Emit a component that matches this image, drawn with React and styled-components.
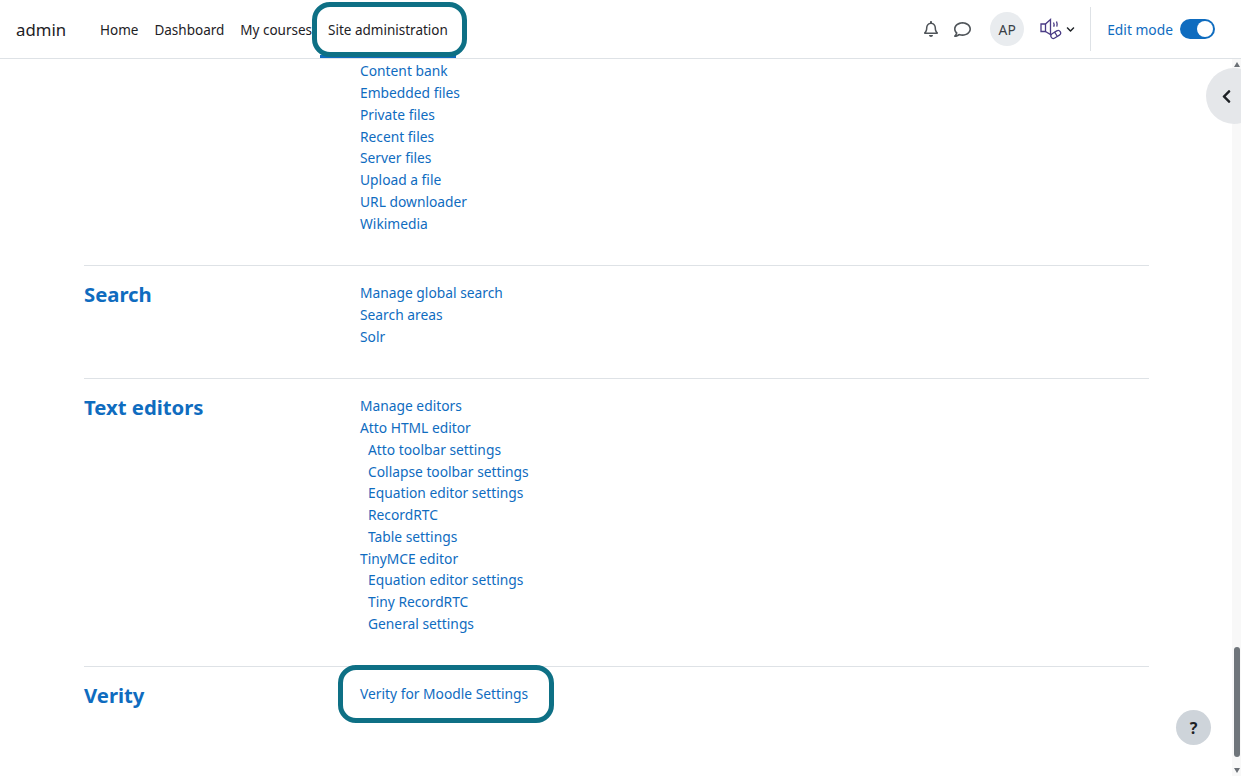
import styled, { createGlobalStyle } from 'styled-components';
import { FaRegBell, FaRegComment, FaChevronDown, FaChevronLeft } from 'react-icons/fa';

const GlobalStyle = createGlobalStyle`
  html, body {
    margin: 0;
    padding: 0;
    background: #fff;
    font-family: "Noto Sans", "Open Sans", Arial, sans-serif;
    font-size: 13.8px;
    color: #1d2125;
  }
`;

const RING = '#0e7085';
const BLUE = '#0f6cbf';

const Page = styled.div`
  position: relative;
  width: 1241px;
  height: 776px;
  overflow: hidden;
  display: flex;
  flex-direction: column;
`;

const Navbar = styled.header`
  height: 58px;
  flex: none;
  display: flex;
  align-items: stretch;
  padding-left: 16px;
  border-bottom: 1px solid #dee2e6;
`;

const Brand = styled.div`
  width: 76px;
  display: flex;
  align-items: center;
  font-size: 16.8px;
`;

const NavList = styled.nav`
  display: flex;
  align-items: stretch;
`;

const NavItem = styled.a`
  position: relative;
  display: flex;
  align-items: center;
  padding: 1px 8px 0;
  font-size: 13.5px;
  white-space: nowrap;

  ${(p) => p.$active && `
    &::before {
      content: '';
      position: absolute;
      left: 0;
      right: 0;
      bottom: 0;
      height: 3px;
      background: ${BLUE};
    }
    &::after {
      content: '';
      position: absolute;
      left: -8px;
      right: -11px;
      top: 2px;
      bottom: 1px;
      border: 5.5px solid ${RING};
      border-radius: 18px;
      background: transparent;
    }
  `}
`;

const RightNav = styled.div`
  margin-left: auto;
  display: flex;
  align-items: center;
  padding-right: 26px;
`;

const IconSlot = styled.span`
  display: flex;
  color: #4f5459;
  font-size: ${(p) => p.$size || 16}px;
  margin-right: ${(p) => p.$gap || 0}px;
`;

const Avatar = styled.div`
  width: 34px;
  height: 34px;
  border-radius: 50%;
  background: #e9ecef;
  display: flex;
  align-items: center;
  justify-content: center;
  color: #3a4046;
  margin-right: 16px;
`;

const LangMenu = styled.div`
  display: flex;
  align-items: center;
  gap: 4px;
  color: #1d2125;
  font-size: 9px;
`;

const Divider = styled.div`
  width: 1px;
  height: 44px;
  background: #dee2e6;
  margin: 0 16px 0 15px;
`;

const EditLabel = styled.span`
  color: ${BLUE};
  margin-right: 7px;
`;

const Toggle = styled.div`
  width: 35px;
  height: 20px;
  border-radius: 10px;
  background: ${BLUE};
  display: flex;
  justify-content: flex-end;
  align-items: center;
  padding-right: 2px;
  box-sizing: border-box;
`;

const Knob = styled.div`
  width: 16px;
  height: 16px;
  border-radius: 50%;
  background: #fff;
`;

const Body = styled.div`
  flex: 1;
  display: flex;
  min-height: 0;
`;

const Main = styled.main`
  flex: 1;
  padding: 1.3px 83px 0 84px;
`;

const Section = styled.section`
  display: grid;
  grid-template-columns: 276px 1fr;
  padding: ${(p) => (p.$first ? 0 : 16)}px 0 ${(p) => p.$bottom}px;
  border-top: ${(p) => (p.$first ? 'none' : '1px solid #dee2e6')};
`;

const Heading = styled.h2`
  margin: 0;
  color: ${BLUE};
  font-size: 20.3px;
  font-weight: 700;
  line-height: 25px;
`;

const LinkList = styled.div`
  display: flex;
  flex-direction: column;
  align-items: flex-start;
`;

const TextLink = styled.a`
  position: relative;
  color: ${BLUE};
  line-height: 21.78px;
  white-space: nowrap;
  padding-left: ${(p) => (p.$sub ? 8 : 0)}px;

  ${(p) => p.$ringed && `
    &::after {
      content: '';
      position: absolute;
      left: -22px;
      right: -26px;
      top: -18px;
      bottom: -18px;
      border: 5.5px solid ${RING};
      border-radius: 18px;
    }
  `}
`;

const ScrollTrack = styled.div`
  width: 9px;
  flex: none;
  background: #f8f8f8;
  display: flex;
  flex-direction: column;
  align-items: center;
  justify-content: space-between;
  padding: 3px 0 3px;
  box-sizing: border-box;
`;

const Arrow = styled.div`
  width: 0;
  height: 0;
  border-left: 3.5px solid transparent;
  border-right: 3.5px solid transparent;
  ${(p) => (p.$down ? 'border-top: 5px solid #6b7076;' : 'border-bottom: 5px solid #6b7076;')}
`;

const ScrollThumbArea = styled.div`
  flex: 1;
  display: flex;
  align-items: flex-end;
  padding: 0 0 11px;
`;

const ScrollThumb = styled.div`
  width: 6px;
  height: 110px;
  border-radius: 3px;
  background: #6f757b;
`;

const DrawerToggle = styled.button`
  position: absolute;
  left: 1206px;
  top: 68px;
  width: 56px;
  height: 56px;
  border: 0;
  padding: 0 0 0 13px;
  border-radius: 50%;
  background: #e5e7ea;
  display: flex;
  align-items: center;
  color: #1d2125;
  font-size: 15px;
`;

const HelpButton = styled.button`
  position: absolute;
  left: 1176px;
  top: 710px;
  width: 35px;
  height: 35px;
  border: 0;
  border-radius: 50%;
  background: #ced4da;
  color: #1d2125;
  font: 700 16px "Noto Sans", Arial, sans-serif;
`;

const SpeakerIcon = () => (
  <svg width="22" height="22" viewBox="0 0 22 22" fill="none" stroke="#4a3b85" strokeWidth="1.3">
    <path d="M1 6h4.5v7.5H1z" />
    <path d="M5.5 6 10.5 1.5v15l-5-3" />
    <path d="M13.5 4.5c.8 1.4.8 2.9.2 4.3M16.5 3.5c.8 1.7.8 3.4.3 5.1" />
    <rect x="10.5" y="14" width="10.5" height="5" rx="2.5" transform="rotate(-32 15.7 16.5)" />
    <path d="M14.5 13.8l2.6 4.2" />
  </svg>
);

const sections = [
  {
    first: true,
    bottom: 30.7,
    links: ['Content bank', 'Embedded files', 'Private files', 'Recent files', 'Server files', 'Upload a file', 'URL downloader', 'Wikimedia'],
  },
  {
    title: 'Search',
    bottom: 30.62,
    links: ['Manage global search', 'Search areas', 'Solr'],
  },
  {
    title: 'Text editors',
    bottom: 31,
    links: [
      'Manage editors',
      'Atto HTML editor',
      { text: 'Atto toolbar settings', sub: true },
      { text: 'Collapse toolbar settings', sub: true },
      { text: 'Equation editor settings', sub: true },
      { text: 'RecordRTC', sub: true },
      { text: 'Table settings', sub: true },
      'TinyMCE editor',
      { text: 'Equation editor settings', sub: true },
      { text: 'Tiny RecordRTC', sub: true },
      { text: 'General settings', sub: true },
    ],
  },
  {
    title: 'Verity',
    bottom: 30,
    links: [{ text: 'Verity for Moodle Settings', ringed: true }],
  },
];

const App = () => {
  return (
    <Page>
      <GlobalStyle />
      <Navbar>
        <Brand>admin</Brand>
        <NavList>
          <NavItem>Home</NavItem>
          <NavItem>Dashboard</NavItem>
          <NavItem>My courses</NavItem>
          <NavItem $active>Site administration</NavItem>
        </NavList>
        <RightNav>
          <IconSlot $gap={15}><FaRegBell /></IconSlot>
          <IconSlot $gap={19} $size={17}><FaRegComment /></IconSlot>
          <Avatar>AP</Avatar>
          <LangMenu>
            <SpeakerIcon />
            <FaChevronDown />
          </LangMenu>
          <Divider />
          <EditLabel>Edit mode</EditLabel>
          <Toggle><Knob /></Toggle>
        </RightNav>
      </Navbar>
      <Body>
        <Main>
          {sections.map((section, i) => (
            <Section key={i} $first={section.first} $bottom={section.bottom}>
              <Heading>{section.title}</Heading>
              <LinkList>
                {section.links.map((link, j) => {
                  const item = typeof link === 'string' ? { text: link } : link;
                  return (
                    <TextLink key={j} $sub={item.sub} $ringed={item.ringed}>
                      {item.text}
                    </TextLink>
                  );
                })}
              </LinkList>
            </Section>
          ))}
        </Main>
        <ScrollTrack>
          <Arrow />
          <ScrollThumbArea><ScrollThumb /></ScrollThumbArea>
          <Arrow $down />
        </ScrollTrack>
      </Body>
      <DrawerToggle><FaChevronLeft /></DrawerToggle>
      <HelpButton>?</HelpButton>
    </Page>
  );
};

export default App;
